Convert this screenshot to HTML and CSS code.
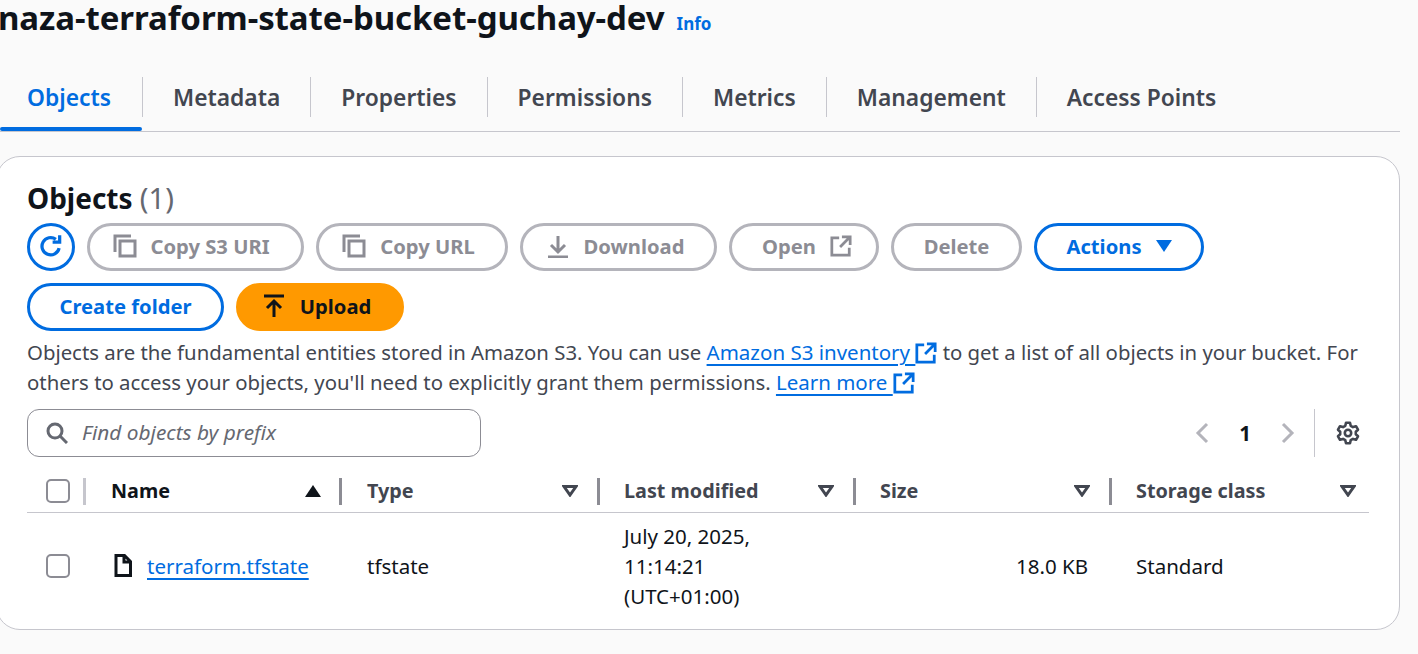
FILE: index.html
```html
<!DOCTYPE html>
<html lang="en">
<head>
    <meta charset="UTF-8">
    <meta name="viewport" content="width=device-width, initial-scale=1.0">
    <title>S3 bucket</title>
    <link rel="stylesheet" href="styles.css">
</head>
<body>
    <svg class="icon-defs" aria-hidden="true">
        <symbol id="i-copy" viewBox="0 0 24 24"><path d="M2 18V2h16M7 7h15v15H7z" fill="none" stroke="currentColor" stroke-width="3"/></symbol>
        <symbol id="i-ext" viewBox="0 0 24 24"><path d="M10 3H2v19h19v-8M13 2h9v9M22 2 11 13" fill="none" stroke="currentColor" stroke-width="3"/></symbol>
    </svg>

    <header class="title-row">
        <h1>naza-terraform-state-bucket-guchay-dev</h1>
        <a class="info-link">Info</a>
    </header>

    <nav class="tabs">
        <a class="tab active">Objects</a>
        <a class="tab">Metadata</a>
        <a class="tab">Properties</a>
        <a class="tab">Permissions</a>
        <a class="tab">Metrics</a>
        <a class="tab">Management</a>
        <a class="tab last">Access Points</a>
    </nav>

    <section class="card">
        <h2>Objects <span class="count">(1)</span></h2>

        <div class="btn-row">
            <button class="btn icon-btn primary" aria-label="Refresh">
                <svg width="26" height="26" viewBox="0 0 24 24"><path d="M19.5 14a8 8 0 1 1-3-8.2M20 2v6.500h-6.500" fill="none" stroke="currentColor" stroke-width="3"/></svg>
            </button>
            <button class="btn off w-s3"><svg class="ic" width="24" height="24"><use href="#i-copy"/></svg>Copy S3 URI</button>
            <button class="btn off w-url"><svg class="ic" width="24" height="24"><use href="#i-copy"/></svg>Copy URL</button>
            <button class="btn off w-dl">
                <svg class="ic" width="24" height="24" viewBox="0 0 24 24"><path d="M12 2v15M5 11l7 7 7-7M2 23h20" fill="none" stroke="currentColor" stroke-width="3"/></svg>Download
            </button>
            <button class="btn off w-open">Open<svg class="ic-r" width="22" height="22"><use href="#i-ext"/></svg></button>
            <button class="btn off w-del">Delete</button>
            <button class="btn primary w-act">Actions
                <svg class="ic-r" width="16" height="12" viewBox="0 0 16 12"><path d="M0 0h16L8 12z" fill="currentColor"/></svg>
            </button>
        </div>

        <div class="btn-row">
            <button class="btn primary w-folder">Create folder</button>
            <button class="btn upload">
                <svg class="ic" width="24" height="24" viewBox="0 0 24 24"><path d="M2 2h20M12 23V8M5 14l7-7 7 7" fill="none" stroke="currentColor" stroke-width="3"/></svg>Upload
            </button>
        </div>

        <p class="desc">Objects are the fundamental entities stored in Amazon S3. You can use <a class="link">Amazon S3 inventory <svg class="ext" width="22" height="22"><use href="#i-ext"/></svg></a> to get a list of all objects in your bucket. For others to access your objects, you'll need to explicitly grant them permissions. <a class="link">Learn more <svg class="ext" width="22" height="22"><use href="#i-ext"/></svg></a></p>

        <div class="filter-row">
            <div class="search">
                <svg width="22" height="22" viewBox="0 0 22 22"><circle cx="9" cy="9" r="7" fill="none" stroke="currentColor" stroke-width="3"/><path d="m14 14 7 7" stroke="currentColor" stroke-width="3"/></svg>
                <span>Find objects by prefix</span>
            </div>
            <div class="pager">
                <svg width="14" height="22" viewBox="0 0 14 22"><path d="M12 2 3 11l9 9" fill="none" stroke="currentColor" stroke-width="3"/></svg>
                <b>1</b>
                <svg width="14" height="22" viewBox="0 0 14 22"><path d="m2 2 9 9-9 9" fill="none" stroke="currentColor" stroke-width="3"/></svg>
            </div>
            <div class="prefs">
                <svg width="24" height="24" viewBox="0 0 24 24"><path d="M10 1.800h4l.7 3 2.300 1.300 3-.9 2 3.500-2.200 2.100v2.400l2.200 2.100-2 3.500-3-.9-2.300 1.300-.7 3h-4l-.7-3L7 17.900l-3 .9-2-3.500 2.200-2.100v-2.400L2 8.700l2-3.500 3 .9 2.300-1.300z" fill="none" stroke="currentColor" stroke-width="2.600" stroke-linejoin="round"/><circle cx="12" cy="12" r="3.200" fill="none" stroke="currentColor" stroke-width="2.600"/></svg>
            </div>
        </div>

        <div class="table">
            <div class="th th-check"><span class="check"></span></div>
            <div class="th th-name"><span>Name</span><svg width="16" height="12" viewBox="0 0 16 12"><path d="M8 0l8 12H0z" fill="currentColor"/></svg></div>
            <div class="th th-type"><span>Type</span><svg class="sort" width="16" height="12" viewBox="0 0 16 12"><path d="M2 1.500h12L8 10z" fill="none" stroke="currentColor" stroke-width="3"/></svg></div>
            <div class="th"><span>Last modified</span><svg class="sort" width="16" height="12" viewBox="0 0 16 12"><path d="M2 1.500h12L8 10z" fill="none" stroke="currentColor" stroke-width="3"/></svg></div>
            <div class="th"><span>Size</span><svg class="sort" width="16" height="12" viewBox="0 0 16 12"><path d="M2 1.500h12L8 10z" fill="none" stroke="currentColor" stroke-width="3"/></svg></div>
            <div class="th th-last"><span>Storage class</span><svg class="sort" width="16" height="12" viewBox="0 0 16 12"><path d="M2 1.500h12L8 10z" fill="none" stroke="currentColor" stroke-width="3"/></svg></div>

            <div class="td td-check"><span class="check"></span></div>
            <div class="td td-name">
                <svg width="18" height="23" viewBox="0 0 18 23"><path d="M2 1.500h8.500l6 6v14H2zM10 1.500V8h6.500" fill="none" stroke="currentColor" stroke-width="3"/></svg>
                <a class="link">terraform.tfstate</a>
            </div>
            <div class="td td-type">tfstate</div>
            <div class="td">July 20, 2025,<br>11:14:21<br>(UTC+01:00)</div>
            <div class="td td-size">18.0 KB</div>
            <div class="td">Standard</div>
        </div>
    </section>
</body>
</html>
```

FILE: styles.css
```css
* {
    box-sizing: border-box;
}

html, body {
    height: 100%;
}

body {
    margin: 0;
    overflow: hidden;
    background-color: #fafafa;
    color: #0f141a;
    font-family: "Noto Sans", Arial, sans-serif;
    font-size: 20.5px;
    line-height: 30px;
}

.icon-defs {
    display: none;
}

/* Title */
.title-row {
    display: flex;
    align-items: baseline;
    gap: 12px;
    height: 44px;
    margin: -1px 0 0 -2px;
    white-space: nowrap;
}

h1 {
    margin: 0;
    font-size: 33px;
    line-height: 38px;
    font-weight: 700;
    letter-spacing: -0.08px;
}

.info-link {
    color: #006ce0;
    font-size: 17px;
    font-weight: 700;
}

/* Tabs */
.tabs {
    display: flex;
    width: 1400px;
    height: 55px;
    margin-top: 34px;
    border-bottom: 1px solid #c6c6cd;
}

.tab {
    position: relative;
    height: 40px;
    padding: 0 30px;
    border-right: 1px solid #c6c6cd;
    color: #424650;
    font-size: 22.8px;
    font-weight: 600;
    line-height: 42px;
}

.tab.last {
    border-right: none;
}

.tab.active {
    color: #006ce0;
    padding: 0 31px 0 27px;
}

.tab.active::after {
    content: "";
    position: absolute;
    left: 0;
    right: 0;
    top: 50px;
    height: 4px;
    border-radius: 2px;
    background-color: #006ce0;
}

/* Card */
.card {
    width: 1404px;
    height: 474px;
    margin: 24px 0 0 -4px;
    padding: 23px 31px 0 30px;
    background-color: #fff;
    border: 1px solid #c6c6cd;
    border-radius: 24px;
}

h2 {
    margin: 0;
    height: 43px;
    font-size: 28px;
    line-height: 36px;
    font-weight: 700;
}

.count {
    color: #656871;
    font-size: 29px;
    font-weight: 400;
}

.btn-row {
    display: flex;
    gap: 12px;
    margin-bottom: 12px;
}

.btn {
    display: flex;
    align-items: center;
    justify-content: center;
    height: 48px;
    padding: 0 0 2px;
    background: #fff;
    border: 3px solid #b4b4bb;
    border-radius: 24px;
    color: #8c8c94;
    font-family: inherit;
    font-size: 20.2px;
    font-weight: 700;
}

.btn.primary {
    border-color: #006ce0;
    color: #006ce0;
}

.icon-btn {
    width: 48px;
}

.w-s3 { width: 217px; padding-right: 9px; }
.w-url { width: 192px; padding-right: 7px; }
.w-dl { width: 197px; padding-right: 7px; }
.w-open { width: 150px; padding-left: 6px; }
.w-del { width: 131px; }
.w-act { width: 170px; }
.w-folder { width: 197px; }

.btn.upload {
    width: 168px;
    padding-right: 7px;
    background-color: #ff9900;
    border-color: #ff9900;
    color: #0f141a;
}

.ic {
    margin-right: 14px;
}

.ic-r {
    margin-left: 14px;
}

/* Description */
.desc {
    margin: -6px 0 0;
    color: #424650;
    font-size: 20.35px;
}

.link {
    color: #006ce0;
    font-size: 20.5px;
    text-decoration: underline;
    text-underline-offset: 4px;
}

.ext {
    vertical-align: -4px;
}

/* Search and pager */
.filter-row {
    display: flex;
    align-items: center;
    height: 48px;
    margin-top: 12px;
}

.search {
    display: flex;
    align-items: center;
    gap: 14px;
    width: 454px;
    height: 48px;
    padding-left: 18px;
    border: 1px solid #8c8c94;
    border-radius: 12px;
    color: #656871;
    font-size: 20.8px;
    font-style: italic;
}

.search span {
    padding-bottom: 2px;
}

.pager {
    display: flex;
    align-items: center;
    gap: 30px;
    margin-left: auto;
    color: #b4b4bb;
}

.pager b {
    color: #0f141a;
}

.prefs {
    display: flex;
    align-items: center;
    height: 48px;
    margin-left: 19px;
    padding: 0 8px 0 21px;
    border-left: 1px solid #c6c6cd;
    color: #424650;
}

/* Table */
.table {
    display: grid;
    grid-template-columns: 59px 256px 258px 256px 256px 257px;
    grid-template-rows: 43px 105px;
    margin-top: 13px;
}

.th {
    display: flex;
    align-items: center;
    justify-content: space-between;
    padding: 0 22px 0 24px;
    border-bottom: 1px solid #c6c6cd;
    color: #424650;
    font-size: 19.8px;
    font-weight: 700;
    background-image: linear-gradient(#8c8c94, #8c8c94);
    background-repeat: no-repeat;
    background-size: 3px 27px;
    background-position: right 0 top 8px;
}

.th-check {
    padding: 0 0 0 19px;
    background-image: linear-gradient(#c6c6cd, #c6c6cd);
}

.th-name {
    color: #0f141a;
    padding: 0 21px 0 25px;
}

.th-type {
    padding-left: 25px;
}

.th-last {
    background-image: none;
    padding-right: 13px;
}

.check {
    display: block;
    width: 24px;
    height: 24px;
    border: 2px solid #8c8c94;
    border-radius: 5px;
}

.td {
    display: flex;
    align-items: center;
    padding-left: 24px;
}

.td-check {
    padding-left: 19px;
}

.td-name {
    gap: 15px;
    padding-left: 28px;
}

.td-type {
    padding-left: 25px;
}

.td-size {
    justify-content: flex-end;
    padding-right: 24px;
}
```
